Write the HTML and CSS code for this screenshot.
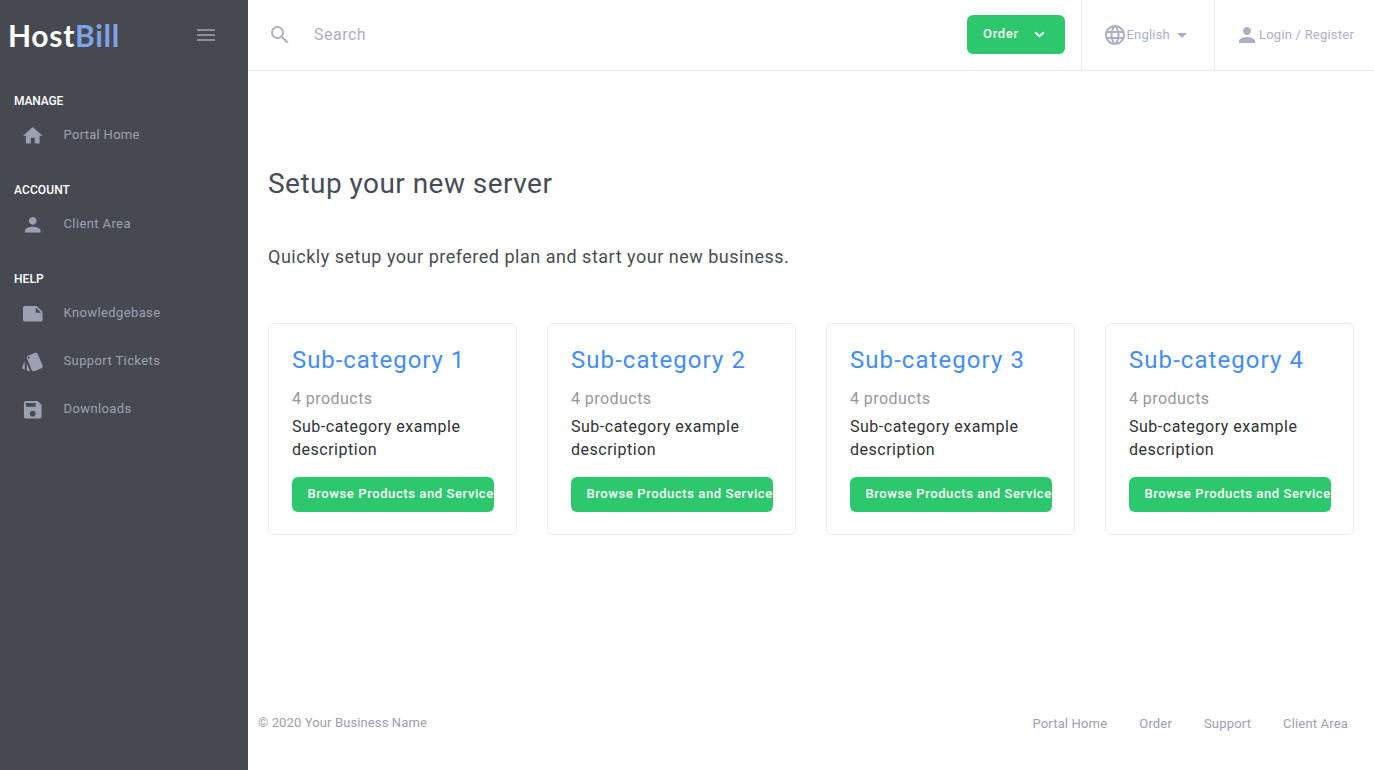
FILE: index.html
```html
<!DOCTYPE html>
<html lang="en">
<head>
<meta charset="utf-8">
<title>HostBill - Setup your new server</title>
<link rel="stylesheet" href="styles.css">
</head>
<body>
<aside class="sidebar">
  <div class="brand">
    <a class="logo">Host<span>Bill</span></a>
    <svg class="icon" viewBox="0 0 24 24"><path d="M3 18h18v-2H3v2zm0-5h18v-2H3v2zm0-7v2h18V6H3z"/></svg>
  </div>
  <nav class="menu">
    <section>
      <h2 class="h-manage">MANAGE</h2>
      <a class="item"><svg class="icon" viewBox="0 0 24 24"><path d="M10 20v-6h4v6h5v-8h3L12 3 2 12h3v8z"/></svg><span class="t-home">Portal Home</span></a>
    </section>
    <section>
      <h2>ACCOUNT</h2>
      <a class="item"><svg class="icon" viewBox="0 0 24 24"><path d="M12 12c2.210 0 4-1.790 4-4s-1.790-4-4-4-4 1.790-4 4 1.790 4 4 4zm0 2c-2.670 0-8 1.340-8 4v2h16v-2c0-2.660-5.330-4-8-4z"/></svg><span>Client Area</span></a>
    </section>
    <section>
      <h2>HELP</h2>
      <a class="item"><svg class="icon" viewBox="0 0 24 24"><path d="M22 10l-6-6H4c-1.100 0-2 .9-2 2v12.010c0 1.100.9 1.990 2 1.990l16-.010c1.100 0 2-.890 2-1.990v-8zm-7-4.500l5.500 5.500H15V5.500z"/></svg><span>Knowledgebase</span></a>
      <a class="item"><svg class="icon" viewBox="0 0 24 24"><path d="M2.530 19.650l1.340.56v-9.030l-2.430 5.860c-.41 1.020.08 2.190 1.090 2.610zm19.500-3.700L17.070 3.980c-.31-.75-1.040-1.210-1.810-1.230-.26 0-.53.04-.79.15L7.100 5.950c-.75.31-1.210 1.030-1.230 1.800-.01.27.04.54.15.8l4.960 11.970c.31.76 1.050 1.220 1.830 1.230.26 0 .52-.05.77-.15l7.360-3.050c1.020-.42 1.510-1.590 1.090-2.600zM7.880 8.750c-.55 0-1-.45-1-1s.45-1 1-1 1 .45 1 1-.45 1-1 1zm-2 11c0 1.100.9 2 2 2h1.450l-3.450-8.340v6.340z"/></svg><span>Support Tickets</span></a>
      <a class="item"><svg class="icon" viewBox="0 0 24 24"><path d="M17 3H5c-1.110 0-2 .9-2 2v14c0 1.100.89 2 2 2h14c1.100 0 2-.9 2-2V7l-4-4zm-5 16c-1.660 0-3-1.340-3-3s1.340-3 3-3 3 1.340 3 3-1.340 3-3 3zm3-10H5V5h10v4z"/></svg><span>Downloads</span></a>
    </section>
  </nav>
</aside>
<div class="page">
  <header class="topbar">
    <div class="search">
      <svg class="icon" viewBox="0 0 24 24"><path d="M15.500 14h-.79l-.28-.27A6.471 6.471 0 0 0 16 9.500 6.500 6.500 0 1 0 9.500 16c1.610 0 3.090-.59 4.230-1.570l.27.28v.79l5 4.990L20.490 19l-4.990-5zm-6 0C7.010 14 5 11.990 5 9.500S7.010 5 9.500 5 14 7.010 14 9.500 11.990 14 9.500 14z"/></svg>
      <span>Search</span>
    </div>
    <a class="order">Order<svg viewBox="0 0 11 7"><path d="M1.200 1.200l4.300 4.100 4.300-4.100"/></svg></a>
    <a class="lang">
      <svg class="icon" viewBox="0 0 24 24"><path d="M11.990 2C6.470 2 2 6.480 2 12s4.470 10 9.990 10C17.520 22 22 17.520 22 12S17.520 2 11.990 2zm6.930 6h-2.950a15.650 15.650 0 0 0-1.380-3.560A8.030 8.030 0 0 1 18.920 8zM12 4.040c.83 1.200 1.480 2.530 1.910 3.960h-3.820c.43-1.430 1.080-2.760 1.910-3.960zM4.260 14C4.100 13.360 4 12.690 4 12s.1-1.360.26-2h3.380c-.08.66-.14 1.320-.14 2s.06 1.340.14 2H4.260zm.82 2h2.950c.32 1.250.78 2.450 1.380 3.560A7.987 7.987 0 0 1 5.080 16zm2.950-8H5.080a7.987 7.987 0 0 1 4.330-3.560A15.650 15.650 0 0 0 8.030 8zM12 19.960c-.83-1.200-1.480-2.530-1.910-3.960h3.820c-.43 1.430-1.080 2.760-1.910 3.960zM14.340 14H9.660c-.09-.66-.16-1.320-.16-2s.07-1.350.16-2h4.680c.09.65.16 1.320.16 2s-.07 1.340-.16 2zm.25 5.560c.6-1.110 1.060-2.310 1.380-3.560h2.950a8.030 8.030 0 0 1-4.330 3.560zM16.360 14c.08-.66.14-1.320.14-2s-.06-1.340-.14-2h3.380c.16.64.26 1.310.26 2s-.1 1.360-.26 2h-3.380z"/></svg>
      <span>English</span><i class="caret"></i>
    </a>
    <a class="login">
      <svg class="icon" viewBox="0 0 24 24"><path d="M12 12c2.210 0 4-1.790 4-4s-1.790-4-4-4-4 1.790-4 4 1.790 4 4 4zm0 2c-2.670 0-8 1.340-8 4v2h16v-2c0-2.660-5.330-4-8-4z"/></svg>
      <span>Login / Register</span>
    </a>
  </header>
  <main class="content">
    <h1>Setup your new server</h1>
    <p class="lead">Quickly setup your prefered plan and start your new business.</p>
    <div class="cards">
      <article class="card"><h3 class="first">Sub-category 1</h3><p class="count">4 products</p><p class="desc">Sub-category example description</p><a class="browse">Browse Products and Service</a></article>
      <article class="card"><h3>Sub-category 2</h3><p class="count">4 products</p><p class="desc">Sub-category example description</p><a class="browse">Browse Products and Service</a></article>
      <article class="card"><h3>Sub-category 3</h3><p class="count">4 products</p><p class="desc">Sub-category example description</p><a class="browse">Browse Products and Service</a></article>
      <article class="card"><h3>Sub-category 4</h3><p class="count">4 products</p><p class="desc">Sub-category example description</p><a class="browse">Browse Products and Service</a></article>
    </div>
  </main>
  <footer class="footer">
    <span class="copy">© 2020 Your Business Name</span>
    <nav><a>Portal Home</a><a>Order</a><a>Support</a><a>Client Area</a></nav>
  </footer>
</div>
</body>
</html>
```

FILE: styles.css
```css
* { box-sizing: border-box; }
body {
  margin: 0;
  display: flex;
  height: 100vh;
  background: #fff;
  font: 400 13px/20px Roboto, sans-serif;
  overflow: hidden;
}
h1, h2, h3, p { margin: 0; font-weight: 400; }
.icon { width: 24px; height: 24px; flex: none; fill: currentColor; display: block; }

.sidebar { width: 248px; flex: none; background: #474950; color: #9ba1b3; }
.brand {
  height: 70px;
  padding: 0 30px 0 8px;
  display: flex;
  align-items: center;
  justify-content: space-between;
  color: #8c8e9e;
}
.logo { font: 700 30px/70px Lato, sans-serif; letter-spacing: .7px; color: #fff; }
.logo span { color: #7ea4e8; }
.menu { padding-top: 21px; display: flex; flex-direction: column; gap: 21px; }
.menu h2 {
  padding-left: 14px;
  font-size: 12px;
  line-height: 20px;
  font-weight: 500;
  letter-spacing: .1px;
  color: #fff;
}
.menu .h-manage { letter-spacing: -.15px; }
.item {
  height: 48px;
  padding-left: 20.5px;
  display: flex;
  align-items: center;
  gap: 19.5px;
  letter-spacing: .39px;
}
.item .icon { width: 23.500px; height: 23.500px; margin-top: 1px; }
.item .t-home { letter-spacing: .3px; }

.page { flex: 1; min-width: 0; display: flex; flex-direction: column; }
.topbar {
  height: 71px;
  flex: none;
  display: flex;
  align-items: center;
  border-bottom: 1px solid #ebebed;
  color: #adb0c0;
}
.search { flex: 1; padding-left: 20px; display: flex; align-items: center; gap: 22px; font-size: 16px; letter-spacing: .5px; }
.order {
  width: 98px;
  height: 39px;
  margin: 0 16px 1px 0;
  padding: 0 20px 2px 16px;
  display: flex;
  align-items: center;
  justify-content: space-between;
  border-radius: 6px;
  background: #2dc76d;
  color: #fff;
  font-weight: 500;
  letter-spacing: .7px;
}
.order svg { width: 11px; height: 7px; margin-top: 2px; fill: none; stroke: #fff; stroke-width: 1.9; }
.lang, .login { height: 70px; display: flex; align-items: center; border-left: 1px solid #ebebed; }
.lang { width: 133px; padding-left: 20.5px; letter-spacing: .2px; }
.caret { margin-left: 7.5px; border: 5px solid transparent; border-top-color: currentColor; border-bottom: 0; margin-top: 1px; }
.login { width: 160px; padding-left: 20px; letter-spacing: .22px; }

.content { flex: 1; padding: 96px 20px 0; color: #494c54; }
h1 { font-size: 28px; line-height: 34px; letter-spacing: .46px; }
.lead { margin-top: 44px; font-size: 18px; line-height: 24px; letter-spacing: .51px; }
.cards { margin-top: 54px; display: grid; grid-template-columns: repeat(4, 1fr); gap: 30px; }
.card { min-width: 0; padding: 23px 22px 22px 23px; border: 1px solid #ebebed; border-radius: 6px; font-size: 16px; line-height: 23px; }
.card h3 { font-size: 24px; line-height: 26px; letter-spacing: 1.06px; color: #438df2; white-space: nowrap; }
.card .first { letter-spacing: .93px; }
.count { margin-top: 14px; letter-spacing: .45px; color: #96979e; }
.desc { margin-top: 5px; letter-spacing: .51px; color: #303135; }
.browse {
  display: block;
  height: 35px;
  margin-top: 16px;
  padding-left: 15.5px;
  overflow: hidden;
  white-space: nowrap;
  border-radius: 6px;
  background: #2dc76d;
  color: #fff;
  font: 500 13px/33px Roboto, sans-serif;
  letter-spacing: .6px;
}

.footer {
  height: 94px;
  padding: 0 26px 0 10px;
  display: flex;
  align-items: center;
  justify-content: space-between;
  color: #9c9eb0;
}
.copy { letter-spacing: .12px; }
.footer nav { display: flex; gap: 32px; padding-top: 2px; letter-spacing: .17px; }
```
